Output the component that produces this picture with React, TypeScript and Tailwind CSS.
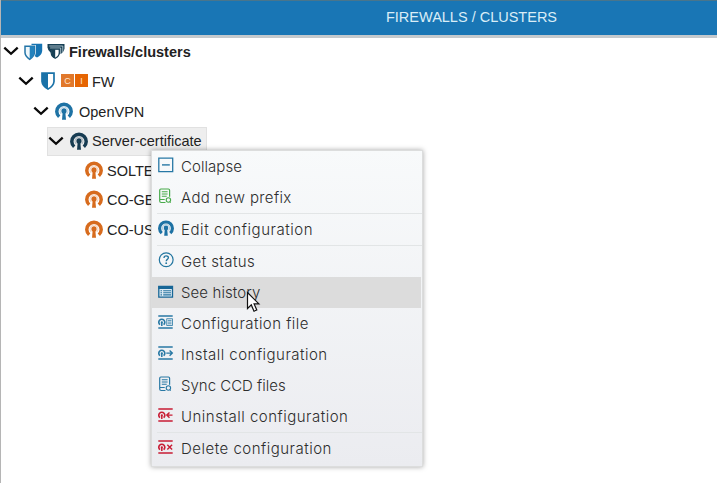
import type { ReactNode } from 'react';

function Chevron() {
  return (
    <svg className="h-4 w-4 shrink-0 -translate-y-px" viewBox="0 0 16 16" fill="none" stroke="#0a0a0a" strokeWidth="2.3">
      <path d="M1.3 4.6 8 10.8l6.700-6.200" />
    </svg>
  );
}

function Vpn({ className }: { className: string }) {
  return (
    <svg className={className} viewBox="0 0 18 18" fill="none" stroke="currentColor">
      <path d="M4.200 14.800A7.200 7.200 0 1 1 13.800 14.800" strokeWidth="3.500" />
      <path d="M6.200 11.800a3.900 3.900 0 1 1 5.600 0" strokeWidth="1.200" opacity=".3" />
      <circle cx="9" cy="8.900" r="2.600" fill="currentColor" stroke="none" />
      <path d="M7.800 9h2.400l.8 8.700H7z" fill="currentColor" stroke="none" />
    </svg>
  );
}

function Shield() {
  return (
    <svg className="h-[18px] w-[14px] shrink-0 -translate-y-px" viewBox="0 0 14 18">
      <path d="M1 1.200h12v8.300Q12.600 14 7 17.100 1.400 14 1 9.500z" fill="#fff" stroke="#1a72a8" strokeWidth="1.700" />
      <path d="M1 1.200h6v15.900Q1.400 14 1 9.500z" fill="#1a72a8" />
    </svg>
  );
}

function Shields() {
  return (
    <svg className="h-[18px] w-[19px] shrink-0" viewBox="0 0 19 18">
      <path d="M7.500.8h10.700V8q-.4 4-5.200 6.500Q8 12 7.500 7.500z" fill="#1674b3" />
      <path d="M0 2.100h11.800V9.800q-.4 4.500-6 7.800Q.3 14.300 0 9.800z" fill="#fff" />
      <path d="M1 3.200h9.400v6.600q-.3 3.600-4.700 6.500Q1.200 13.300 1 9.800z" fill="#eef7fb" stroke="#2374a7" strokeWidth="1.500" />
      <path d="M5.700 3.200h4.700v6.600q-.3 3.600-4.700 6.500z" fill="#2382bd" />
    </svg>
  );
}

function ClusterShields() {
  return (
    <svg className="h-4 w-[18px] shrink-0 -translate-y-px" viewBox="0 0 18 16">
      <path d="M.5 1h17v4.500q-.2 3-3 5l-2.500 1L3.500 9.500Q.8 7.500.5 4.500z" fill="#174055" />
      <path d="M2.300 3h13.500v6M3.200 5h10.500v6" fill="none" stroke="#cbdbe2" strokeWidth=".8" />
      <path d="M4.200 6.200h8v4.200q-.2 3-4 4.900-3.800-1.900-4-4.900z" fill="#fff" stroke="#174055" strokeWidth="1.100" />
      <path d="M4.200 6.200h4v9.100q-3.800-1.900-4-4.900z" fill="#174055" />
    </svg>
  );
}

function MinusBox() {
  return (
    <svg className="h-4 w-4" viewBox="0 0 16 16" fill="none" stroke="#2778a5">
      <path d="M.8 1.100h13.900v13.600H.8z" strokeWidth="1.300" />
      <path d="M4 7.900h7.800" strokeWidth="1.400" />
    </svg>
  );
}

function Doc() {
  return (
    <svg className="h-4 w-4" viewBox="0 0 16 16" fill="none" stroke="currentColor">
      <path d="M7.500 14.500H3.200Q1.700 14.500 1.700 13V2.200Q1.700 1 2.900 1h7.500q1.200 0 1.200 1.200v6.500M1.700 11.500h5" strokeWidth="1.200" />
      <path d="M3.800 3.800h5.800M3.800 6h5.800M3.800 8.200h4.900" strokeWidth="1.100" />
      <circle cx="10.400" cy="12" r="2.200" strokeWidth="1.100" />
      <path d="m11.700 13.800 1 1" />
    </svg>
  );
}

function Question() {
  return (
    <svg className="h-4 w-4" viewBox="0 0 16 16" fill="none" stroke="#22759f">
      <circle cx="8.200" cy="7.700" r="6.900" strokeWidth="1.200" />
      <path d="M6 6C6 3.100 10.500 3.300 10.400 5.800 10.300 7.400 8.200 7.400 8.200 9.200" strokeWidth="1.300" />
      <circle cx="8.200" cy="11.200" r=".9" fill="#22759f" stroke="none" />
    </svg>
  );
}

function History() {
  return (
    <svg className="h-4 w-4" viewBox="0 0 16 16" fill="none">
      <path d="M.8 3.500h13.700v10.600H.8z" fill="#dceaf3" stroke="#176696" strokeWidth="1.300" />
      <path d="M.3 3h14.700v3H.3z" fill="#176696" />
      <path d="M2.500 7.700h1.500M2.500 9.800h1.500M2.500 11.900h1.500M5.200 7.700h7.800M5.200 9.800h7.800M5.200 11.900h7.800" stroke="#2875a1" strokeWidth="1.100" />
    </svg>
  );
}

type Kind = 'list' | 'right' | 'left' | 'cross';

function ConfigIcon({ kind }: { kind: Kind }) {
  return (
    <svg className="h-4 w-4" viewBox="0 0 16 16" fill="none" stroke="currentColor">
      <path d="M.3 2h14.400M.3 14h14.400" strokeWidth="1.300" />
      <path d="M2 10.700a3 3 0 1 1 3.600 0" strokeWidth="1.600" />
      <path d="M3.800 8.300v3.700" strokeWidth="1.500" />
      <circle cx="3.800" cy="8.300" r="1.100" fill="currentColor" stroke="none" />
      {kind === 'list' && <path d="M8.700 4.700h5.800v6.800H8.700zM9.700 6.400h3.800M9.700 8.100h3.800M9.700 9.800h3.800" strokeWidth=".8" />}
      {kind === 'right' && <path d="M8.300 8.100h6M11.600 5.400l2.700 2.700-2.700 2.700" strokeWidth="1.400" />}
      {kind === 'left' && <path d="M14.500 8.100H8.800M11.500 5.400 8.800 8.100l2.700 2.700" strokeWidth="1.400" />}
      {kind === 'cross' && <path d="m9.300 5.700 4.800 4.800m0-4.800-4.800 4.800" strokeWidth="1.400" />}
    </svg>
  );
}

function Item({ icon, label, text, active = false }: { icon: ReactNode; label: string; text: string; active?: boolean }) {
  return (
    <div className={`flex h-[31px] items-center pl-[6px] ${active ? 'mr-px bg-[#dcdcdc]' : ''}`}>
      <span className="mr-[7px] flex h-5 w-4 shrink-0 items-start">{icon}</span>
      <span className={`whitespace-nowrap font-[Inter,sans-serif] text-[15px] font-light leading-[20px] text-[#2d2d2d] ${text}`}>{label}</span>
    </div>
  );
}

function Separator() {
  return <div className="ml-[5px] h-px bg-[#e2e5e6]" />;
}

export default function App() {
  return (
    <div className="relative h-[483px] w-[717px] overflow-hidden border-l border-[#b5b5b5] bg-white font-['Liberation_Sans',Arial,sans-serif] text-[#222]">
      <header className="flex h-[38px] justify-center border-b-[3px] border-t border-b-[#c4c9cd] border-t-[#49758c] bg-[#1976b5] pl-[225px] pt-[7px] text-[14.5px] leading-[18px] text-[#d9edf7]">
        <span>FIREWALLS / CLUSTERS</span>
      </header>
      <main className="text-[14.5px] leading-[20px]">
        <div className="flex h-[28px] items-center pl-[2px]">
          <Chevron />
          <span className="ml-[5px] flex items-center gap-[4px]"><Shields /><ClusterShields /></span>
          <b className="ml-[4px]">Firewalls/clusters</b>
        </div>
        <div className="flex h-[31px] items-center pl-[17px]">
          <Chevron /><span className="ml-[7px] flex"><Shield /></span>
          <span className="-mt-[3px] ml-[6px] mr-[4px] flex h-[13px] gap-px text-[9px] leading-[14px] text-[#ffe5cb]">
            <span className="w-[13px] bg-[#e1782b] text-center">C</span><span className="w-[13px] bg-[#e66503] text-center">I</span>
          </span>
          <span>FW</span>
        </div>
        <div className="flex h-[30px] items-center pl-[32px]">
          <Chevron /><Vpn className="-mt-[2px] ml-[6px] mr-[6px] h-[18px] w-[18px] text-[#1e72a4]" /><span>OpenVPN</span>
        </div>
        <div className="ml-[46px] flex h-[29px] w-[160px] items-center border border-[#e1e1e1] bg-[#eee]">
          <Chevron /><Vpn className="-mt-[2px] ml-[6px] mr-[4px] h-[18px] w-[18px] text-[#173c52]" /><span className="-mt-[2px]">Server-certificate</span>
        </div>
        {['SOLTEC', 'CO-GER', 'CO-USA'].map((name) => (
          <div key={name} className="flex h-[29.500px] items-center pl-[84px]">
            <Vpn className="-mt-[2px] mr-[4px] h-[18px] w-[18px] text-[#d76b1d]" /><span>{name}</span>
          </div>
        ))}
      </main>

      <div className="absolute left-[150px] top-[150px] h-[317px] w-[272px] border border-[#dcdddd] bg-linear-to-b from-[#f8fafb] to-[#ebecf0] shadow-[0_0_5px_rgba(0,0,0,0.35)]">
        <Item icon={<MinusBox />} label="Collapse" text="tracking-[0.05px]" />
        <Item icon={<span className="text-[#48aa4b]"><Doc /></span>} label="Add new prefix" text="tracking-[0.37px]" />
        <Separator />
        <Item icon={<Vpn className="h-4 w-4 text-[#1e72a4]" />} label="Edit configuration" text="tracking-[0.56px]" />
        <Separator />
        <Item icon={<Question />} label="Get status" text="tracking-[0.4px]" />
        <Item icon={<History />} label="See history" text="tracking-[0.1px]" active />
        <Item icon={<span className="text-[#2878a4]"><ConfigIcon kind="list" /></span>} label="Configuration file" text="tracking-[0.46px]" />
        <Item icon={<span className="text-[#2878a4]"><ConfigIcon kind="right" /></span>} label="Install configuration" text="tracking-[0.48px]" />
        <Item icon={<span className="text-[#2878a4]"><Doc /></span>} label="Sync CCD files" text="tracking-[0px]" />
        <Item icon={<span className="text-[#c81d35]"><ConfigIcon kind="left" /></span>} label="Uninstall configuration" text="tracking-[0.5px]" />
        <Separator />
        <Item icon={<span className="text-[#c81d35]"><ConfigIcon kind="cross" /></span>} label="Delete configuration" text="tracking-[0.5px]" />
      </div>
      <svg className="absolute left-[245px] top-[291px] h-[22px] w-[15px]" viewBox="0 0 15 22">
        <path d="M1.500 1.500v16l3.800-3.600 2.700 6.300 2.800-1.200-2.700-6.100h4.800z" fill="#fff" stroke="#111" strokeWidth="1.200" />
      </svg>
    </div>
  );
}
